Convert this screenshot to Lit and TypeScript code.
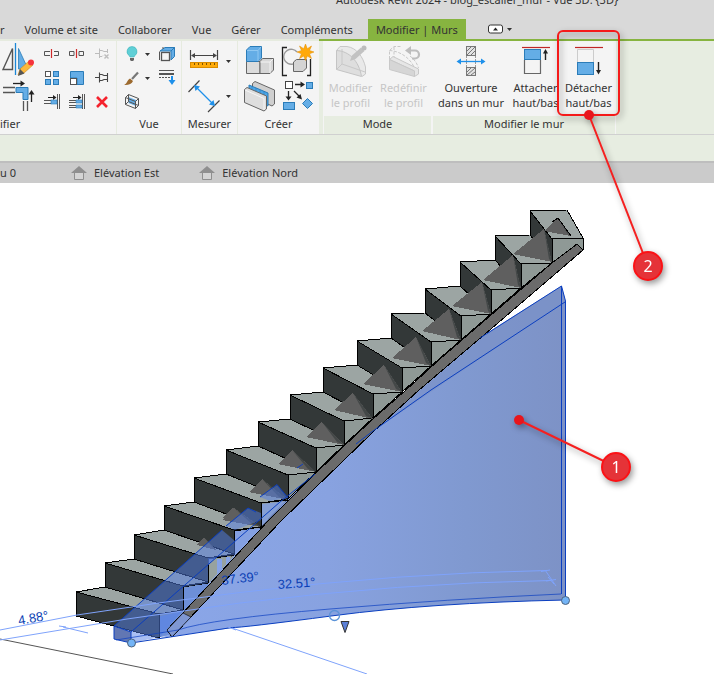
import { LitElement, html, svg, css } from "lit";
import { customElement } from "lit/decorators.js";

type Pt = [number, number];

/* Upper left and upper right corner of each riser, lowest step first. */
const STEPS: { l: Pt; r: Pt }[] = [
  { l: [76, 592], r: [159, 614] },
  { l: [105, 563], r: [183, 586] },
  { l: [134, 535], r: [208, 558] },
  { l: [164, 506], r: [234, 530] },
  { l: [194, 478], r: [261, 503] },
  { l: [226, 450], r: [288, 475] },
  { l: [258, 422], r: [316, 448] },
  { l: [290, 395], r: [344, 421] },
  { l: [323, 368], r: [373, 394] },
  { l: [357, 341], r: [402, 368] },
  { l: [391, 314], r: [431, 342] },
  { l: [425, 289], r: [461, 316] },
  { l: [460, 262], r: [491, 290] },
  { l: [495, 236], r: [521, 264] },
  { l: [530, 211], r: [552, 239] },
];
const RISE = 24;

/* Visible part of the underside seen through each tread: left, apex, right. */
const SUPPORTS: [Pt, Pt, Pt][] = [
  [[197, 545], [204, 537], [216, 550]],
  [[222, 518], [233, 508], [250, 523]],
  [[222, 520], [234, 508], [261, 527]],
  [[249, 492], [262, 479], [288, 500]],
  [[278, 464], [292, 450], [316, 472]],
  [[306, 437], [322, 422], [344, 445]],
  [[334, 410], [353, 393], [373, 419]],
  [[363, 384], [384, 365], [402, 392]],
  [[392, 358], [416, 337], [431, 366]],
  [[422, 331], [449, 309], [461, 340]],
  [[452, 306], [482, 282], [491, 314]],
  [[483, 280], [513, 255], [521, 288]],
  [[513, 254], [544, 229], [552, 262]],
  [[544, 231], [558, 218], [571, 236]],
];

const pts = (...p: Pt[]) => p.map((q) => q.join(",")).join(" ");
const drop = ([x, y]: Pt): Pt => [x, y + RISE];

const icon = (w: number, h: number, body: unknown) =>
  html`<svg width=${w} height=${h} viewBox="0 0 ${w} ${h}" aria-hidden="true">${body}</svg>`;

const caret = (x: number, y: number) =>
  svg`<path d="M${x} ${y}h5l-2.5 3z" fill="#333"/>`;

const G = "#555";
const B = "#64ade6";
const D = "#2b7cb8";

const ICONS = {
  mirror: icon(36, 36, svg`
    <path d="M3 28.5 12.500 7.500V28.500Z" fill="none" stroke=${G} stroke-width="1.400"/>
    <path d="M15.500 2V34" stroke="#1b87d6" stroke-width="1.300"/>
    <path d="M18.500 7.500V28H28Z" fill=${B} stroke=${D} stroke-width=".8"/>
    <path d="M18 34 20 28 29 20 33 24 24 32Z" fill="#fbb83e" stroke="#c98a20" stroke-width=".6"/>
    <path d="M18 35 20 28 24.500 32.500Z" fill="#555"/>
    <circle cx="31" cy="21.500" r="3" fill="#f5333c"/>`),
  trim: icon(36, 36, svg`
    <path d="M13 6.500H22" stroke="#222" stroke-width="1.300"/><path d="M20.500 3.500 25 6.500 20.500 9.500Z" fill="#222"/>
    <path d="M3 10.500H15M3 15.500H15" stroke=${G} stroke-width="1.300"/>
    <path d="M16 10.500H28V22.500H23V15.500H16Z" fill=${B} stroke=${D}/>
    <path d="M23.500 24V34M27.500 24V34" stroke=${G} stroke-width="1.300"/>
    <path d="M31.500 25V16" stroke="#222" stroke-width="1.300"/><path d="M28.500 17.500 31.500 13 34.500 17.500Z" fill="#222"/>`),
  split: icon(24, 24, svg`
    <path d="M10 10.500H4.500V14.500H10M14 10.500H18.500V14.500H14" fill="none" stroke=${G}/>
    <path d="M11.500 8V17" stroke="#d02a2a" stroke-width="1.200"/>`),
  splitGap: icon(24, 24, svg`
    <path d="M4.500 10.500H9V14.500H4.500ZM14 10.500H18.500V14.500H14Z" fill="none" stroke=${G}/>
    <path d="M11.500 8V17" stroke="#d02a2a" stroke-width="1.200"/>`),
  unpin: icon(24, 24, svg`
    <g fill="none" stroke="#bcbcbc"><path d="M5 12.500H10M9.500 7.500V17M10 9.500H12L14 10.500H17.500M10 15.500H12L13 14.500M17.500 8V12"/>
    <path d="M14.500 13.500 18.500 17.500M18.500 13.500 14.500 17.500" stroke-width="1.400"/></g>`),
  array: icon(24, 24, svg`
    <rect x="5.500" y="6.500" width="5" height="5" fill="#fff" stroke=${G}/>
    <g fill=${B} stroke=${D}><rect x="13.500" y="6.500" width="5" height="5"/><rect x="5.500" y="14.500" width="5" height="5"/><rect x="13.500" y="14.500" width="5" height="5"/></g>`),
  scale: icon(24, 24, svg`
    <path d="M5.500 6.500H18.500V19.500H12V13H5.500Z" fill=${B} stroke=${D}/>
    <rect x="5.500" y="13.500" width="6" height="6" fill="#fff" stroke=${G}/>`),
  pin: icon(24, 24, svg`
    <path d="M5 12.500H10M9.500 7.500V17.500M10 9.500H12L14 10.500H17M10 15.500H12L14 14.500H17M17.500 8V17" fill="none" stroke="#444" stroke-width="1.100"/>`),
  extend: icon(24, 24, svg`
    <path d="M8 8.500H14" stroke="#222"/><path d="M13 6 16.500 8.500 13 11Z" fill="#222"/>
    <path d="M4 11.500H11M4 14.500H11M17.500 5V20M19.500 5V20" stroke=${G}/>
    <rect x="11" y="11" width="6" height="4" fill=${B} stroke=${D} stroke-width=".6"/>`),
  extendMany: icon(24, 24, svg`
    <path d="M8 8.500H14" stroke="#222"/><path d="M13 6 16.500 8.500 13 11Z" fill="#222"/>
    <path d="M4 11.500H11M4 13.500H11M4 16.500H11M4 18.500H11M17.500 5V20M19.500 5V20" stroke=${G}/>
    <path d="M11 11H17V14H11ZM11 16H17V19H11Z" fill=${B} stroke=${D} stroke-width=".6"/>`),
  remove: icon(24, 24, svg`<path d="M7 8 17 18M17 8 7 18" stroke="#f5222d" stroke-width="2.600"/>`),
  bulb: icon(34, 24, svg`
    <path d="M12 5.500a5 5 0 0 0-3 9l1 1.500h4l1-1.500a5 5 0 0 0-3-9Z" fill="#5fcfd6" stroke="#3fb3bb" stroke-width=".6"/>
    <path d="M10 17H14V19L13 20H11L10 19Z" fill="#666"/>${caret(25, 12)}`),
  brush: icon(34, 24, svg`
    <path d="M12 14 18 7.500" stroke="#777" stroke-width="2.200"/>
    <path d="M4 20C7 19 7 15 10 13.500L13 16C12 19 8 20.500 4 20Z" fill="#9c6a2f"/>${caret(25, 12)}`),
  section: icon(34, 24, svg`
    <path d="M8.500 8 16 11V17L8.500 14Z" fill=${B}/>
    <path d="M5.500 8.500 15.500 12.500V19.500L5.500 15.500ZM5.500 8.500 8.500 5.500 18.500 9.500 15.500 12.500M18.500 9.500V16.500L15.500 19.500M8.500 5.500V12.500L18.500 16.500M5.500 15.500 8.500 12.500" fill="none" stroke=${G}/>`),
  cube: icon(24, 24, svg`
    <path d="M5 10 10 6.500H19.500L16 10ZM16 10 19.500 6.500V15.500L16 19Z" fill=${B} stroke=${D}/>
    <path d="M4.500 10.500V19M8 8V6" stroke=${G}/>
    <rect x="6.500" y="11.500" width="8" height="8" fill="#f4f4f4" stroke=${G} stroke-width="1.300"/>`),
  lines: icon(24, 24, svg`
    <path d="M4 5.500H19" stroke=${G}/><path d="M4 9H19" stroke=${G} stroke-width="2"/>
    <path d="M4 12.500H15" stroke=${G} stroke-dasharray="2 1"/>
    <path d="M17 11V16" stroke="#1e90ea" stroke-width="2"/><path d="M13.500 15H20.500L17 20Z" fill="#1e90ea"/>`),
  ruler: icon(52, 37, svg`
    <path d="M6.500 9V19M33.500 9V19M8 14.500H32" stroke="#444" stroke-width="1.200"/>
    <path d="M7 14.500 11 12V17ZM33 14.500 29 12V17Z" fill="#444"/>
    <rect x="6.500" y="21.500" width="27" height="5" fill="#ffab0a" stroke="#d98c00"/>
    <path d="M10.500 22V24M14.500 22V24M18.500 22V24M22.500 22V24M26.500 22V24M30.500 22V24" stroke="#7a5200"/>${caret(42, 19)}`),
  dimension: icon(52, 37, svg`
    <path d="M4.500 14 15.500 2.500M24 34 35.500 22.500" stroke="#444" stroke-width="1.200"/>
    <path d="M12 9 29 26" stroke="#1e90ea" stroke-width="1.300"/>
    <path d="M10 7 16 8.500 11.500 13ZM31 28 25 26.500 29.500 22Z" fill="#1e90ea"/>${caret(42, 17)}`),
  group: icon(38, 37, svg`
    <path d="M4.500 20.500H18V32.500H4.500Z" fill="#dcdcdc" stroke="#666"/>
    <path d="M18 20.500 20.500 17.500H31.500V29L28 32.500H18Z" fill="#d6d6d6" stroke="#666"/>
    <path d="M18.500 21H28V32M28 21 31 18" fill="none" stroke="#f3f3f3"/>
    <path d="M4.500 20.500V9L8 5.500H19.500V17L16 20.500Z" fill="#64ade6" stroke=${D}/>
    <path d="M5 9.500H16V20M16 9.500 19 6" fill="none" stroke="#8fc8f2"/>`),
  assembly: icon(38, 37, svg`
    <path d="M7 6.500H2.500V34.500H7M27 34.500H30.500V18" fill="none" stroke="#222" stroke-width="1.300"/>
    <path d="M17 11A7.500 7.500 0 1 0 13 23" fill="none" stroke="#999" stroke-width="1.400"/>
    <path d="M13.500 21 16.500 18.500H26.500V27L23 30.500H13.500Z" fill="#d4d4d4" stroke="#666"/>
    <path d="M25.500 3 27.300 7.700 31.500 5 29.500 9.500 34 11 29.500 12.800 31.500 17.500 27.300 15 25.500 19.500 23.700 15 19.500 17.500 21.500 12.800 17 11 21.500 9.500 19.500 5 23.700 7.700Z" fill="#ffa90a" stroke="#e08a00" stroke-width=".5"/>`),
  parts: icon(38, 37, svg`
    <path d="M10.500 5.500 13 3.500 32.500 12V26L30 28 10.500 19Z" fill="#cfcfcf" stroke="#666"/>
    <path d="M7 7 26 15V28L7 20Z" fill="#4ba6e8" stroke=${D}/>
    <path d="M10 8V21M14 10V22M18 12V24M22 13V25" stroke=${D} stroke-width=".6"/>
    <path d="M2.500 11.500 5 9.500 24.500 18V31L22 33 2.500 24.500Z" fill="#dedede" stroke="#666"/>
    <path d="M3 12 22 20.500V32" fill="none" stroke="#f5f5f5"/>`),
  convert: icon(38, 37, svg`
    <rect x="5.500" y="3.500" width="7" height="7" fill="#fff" stroke="#444"/>
    <rect x="26.500" y="4.500" width="6" height="6" fill=${B} stroke=${D}/>
    <rect x="3.500" y="24.500" width="11" height="7" fill=${B} stroke=${D}/>
    <path d="M27.500 20.500 32.500 25.500 27.500 30.500 22.500 25.500Z" fill=${B} stroke=${D}/>
    <path d="M15 6.500H21M8.500 13V19M14 13 19 18" stroke="#222" stroke-width="1.300"/>
    <path d="M20.500 3.500 25 6.500 20.500 9.500ZM5.500 18.500H11.500L8.500 22.500ZM22 21.500 16.500 19.500 20.500 16Z" fill="#222"/>`),
  editProfile: icon(36, 36, svg`
    <path d="M3.500 9.500 7 5.500H14C24 7 30 16 32.500 26V33L29 35.500" fill="#e9e9e9" stroke="#c8c8c8"/>
    <path d="M3.500 9.500C16 10 26 20 28.500 35.500L3.500 28.500Z" fill="#dedede" stroke="#c4c4c4"/>
    <path d="M3.500 28.500 9 23 32 31M9 23V8" fill="none" stroke="#c8c8c8"/>
    <path d="M17 20 19 14.500 28 6.500 31.500 10 22.500 18Z" fill="#c2c2c2"/><circle cx="31" cy="7" r="2.500" fill="#bcbcbc"/>`),
  resetProfile: icon(36, 36, svg`
    <path d="M3.500 18V9.500L8 5.500H15M3.500 9.500C14 10 24 17 28 26M8 6V17M24 15C28 18 31 22 32.500 27" fill="none" stroke="#c8c8c8" stroke-dasharray="3 1.500"/>
    <path d="M3.500 18.500 7 15.500 32.500 28V33L28.500 35.500V30Z" fill="#e6e6e6" stroke="#c8c8c8"/>
    <path d="M3.500 18.500 28.500 30V35.500L3.500 28.500Z" fill="#d6d6d6" stroke="#c8c8c8"/>
    <path d="M21 9.500H29A4 4 0 0 1 29 17.500H26" fill="none" stroke="#bdbdbd" stroke-width="2.200"/>
    <path d="M19 9.500 25 5V14Z" fill="#bdbdbd"/>`),
  opening: icon(36, 36, svg`
    <g fill="#e2e2e2" stroke="#777"><rect x="13.500" y="5.500" width="9" height="9"/><rect x="13.500" y="26.500" width="9" height="8"/></g>
    <path d="M14 10 18 6M14 14 22 6M18 14 22 10M14 31 18 27M14 34 22 27M18 34 22 31" stroke="#777"/>
    <path d="M13.500 15V26M22.500 15V26" stroke="#999" stroke-dasharray="2 1"/>
    <path d="M6 20.500H30" stroke="#1e90ea" stroke-width="1.300"/>
    <path d="M3.500 20.500 8 17.500V23.500ZM32.500 20.500 28 17.500V23.500Z" fill="#1e90ea"/>`),
  attach: icon(36, 36, svg`
    <path d="M4 6.500H32" stroke="#c02626" stroke-width="1.200"/>
    <path d="M6.500 19V32.500H22.500V19" fill="none" stroke="#666" stroke-width="1.200"/>
    <rect x="6.500" y="8.500" width="16" height="10" fill=${B} stroke=${D}/>
    <path d="M27.500 19V11" stroke="#222" stroke-width="1.400"/><path d="M25 12.500 27.500 8 30 12.500Z" fill="#222"/>`),
  detach: icon(36, 36, svg`
    <path d="M4 6.500H32" stroke="#c02626" stroke-width="1.200"/>
    <path d="M6.500 21V8.500H22.500V21" fill="none" stroke="#ccc"/>
    <rect x="6.500" y="21.500" width="16" height="12" fill=${B} stroke=${D}/>
    <path d="M27.500 21V30" stroke="#222" stroke-width="1.400"/><path d="M25 29 27.500 33.500 30 29Z" fill="#222"/>`),
  house: icon(16, 16, svg`
    <path d="M8 1 16 8H0Z" fill="#8f8f8f"/><path d="M3.500 8V14.500H12.500V8" fill="#d4d4d4" stroke="#8f8f8f"/>`),
};

const tool = (label: string, glyph: unknown) =>
  html`<button class="tool" type="button" aria-label=${label}>${glyph}</button>`;

@customElement("ribbon-panel")
class RibbonPanel extends LitElement {
  static properties = { label: {}, tinted: { type: Boolean, reflect: true } };
  declare label: string;
  declare tinted: boolean;

  static styles = css`
    :host { display: flex; flex-direction: column; box-sizing: border-box; background: #f4f4f4; border-right: 1px solid #e6ebdf; text-align: center; }
    .body { flex: 1; display: flex; min-height: 0; }
    .label { height: 18px; line-height: 16px; }
    :host([tinted]) { border-right: 1px solid #f4f4f4; border-left: 1px solid #f4f4f4; }
    :host([tinted]) .label { background: #e7ede1; }
  `;

  render() {
    return html`<div class="body"><slot></slot></div><div class="label">${this.label}</div>`;
  }
}

@customElement("model-view")
class ModelView extends LitElement {
  static styles = css`
    :host { display: block; overflow: hidden; background: #fff; }
    svg { display: block; }
    .edge { stroke: #000; stroke-width: 1; stroke-linejoin: round; shape-rendering: crispEdges; }
    .tread { fill: #9ca5a3; }
    .riser { fill: #333838; }
    .side { fill: #8f9996; }
    .support { fill: #5f5f5f; shape-rendering: crispEdges; }
    .shade { fill: #444848; }
    .line { fill: none; stroke: #0b3fc0; stroke-width: 1; }
    .guide { fill: none; stroke: #7fa3fb; stroke-width: 1; }
    .angle { font: 13px "Liberation Sans", Arial, sans-serif; fill: #0b3fb4; }
    .grip { fill: #73b4f6; stroke: #4d6480; stroke-width: 1; }
  `;

  private step(i: number) {
    const { l, r } = STEPS[i];
    const n = STEPS[i + 1];
    const back = n ? [drop(n.l), drop(n.r)] : ([[567, 210], [583, 238]] as Pt[]);
    return svg`
      <polygon class="side edge" points=${n ? pts(r, back[1], drop(r)) : pts(r, [583, 238], [583, 250], [577, 245], drop(r))}/>
      <polygon class="tread edge" points=${pts(l, back[0], back[1], r)}/>
      <polygon class="riser edge" points=${pts(l, r, drop(r), drop(l))}/>`;
  }

  render() {
    return html`<svg width="714" height="491" viewBox="0 183 714 491" role="img" aria-label="Vue 3D">
      <defs>
        <linearGradient id="wall" gradientUnits="userSpaceOnUse" x1="170" y1="0" x2="565" y2="0">
          <stop offset="0" stop-color="#8aa6e8"/><stop offset=".4" stop-color="#88a2e0"/>
          <stop offset=".75" stop-color="#8099d0"/><stop offset="1" stop-color="#7d92c6"/>
        </linearGradient>
      </defs>
      <path d="M0 639 173 674" stroke="#555" fill="none"/>
      <path d="M160 638 172 634 276 521 373 428 419 387 476 340 561.500 286 565.500 301V600Q430 603 335 615.500T232 628Z" fill="url(#wall)"/>
      <path d="M373 431 419 387 476 340 561.500 286 565.500 301Z" fill="#7a92c8" opacity=".7"/>
      <path d="M160 637V616L208 560 234 532 261 504 316 460V474L172 635Z" fill="#88a3e4"/>
      ${STEPS.map((_, k) => this.step(STEPS.length - 1 - k))}
      ${SUPPORTS.map(([a, b, c]) => svg`
        <polygon class="support" points=${pts(a, b, c)}/>
        <polygon class="shade" points=${pts(b, c, [Math.round((b[0] + 2 * c[0]) / 3), c[1] - 3])}/>`)}
      <path class="edge" d="M552 222 558 218 571 236" fill="none"/>

      <polygon points="183,588 208,583 208,590 172,634 160,637 160,616 183,611" fill="#6d8fd8"/>
      <path d="M209 560 234 556 208 584Z" fill="#97a29f"/>
      <path d="M217 559h5v10l-5 5ZM226 557h4v3l-4 5Z" fill="#86a3e8"/>
      <polygon points="235,531 261,528 234,555" fill="#84a0e2"/>
      <polygon points="262,504 288,501 261,527" fill="#84a0e2" opacity=".85"/>
      <path class="edge" d="M159 616V638M183 610V587L208 583V559L234 555V531L261 527V503L288 500" fill="none"/>

      <g fill="#5480e8" fill-opacity=".5">
        <path d="M114 626 222 530 235 541 131 632Z"/>
        <path d="M131 632 235 541V555L208 558V583L183 587V610L160 637 131 643Z"/>
        <path d="M226 526 248 508 261 513V520L235 530Z"/>
        <path d="M260 497 277 485 288 498 270 501Z"/>
        <path d="M114 626 131 632V643L114 639Z" fill="#3b55a0" fill-opacity=".8"/>
      </g>

      <path class="edge" d="M167 630 208 586 269 520 316 473 344 446 373 419 406 390 440 359 491 315 552 263 577 244 583 250 491 329 419 390 373 432 281 521 172 637Z" fill="#6b6b6b"/>
      <path d="M167 630 183 613 191 617 172 637Z" fill="#7f97d2" stroke="#000" stroke-width=".6"/>

      <g class="line">
        <path d="M114 626 222 530M226 526 248 508 256 512M260 497 277 484.500 288 498M297 468 303 464"/>
        <path d="M131 632 280 502 315 474"/>
        <path d="M356 444 373 431 431 390 565 302"/>
        <path d="M480 338 561.500 286 565.500 301V600M561.500 286V594" />
        <path d="M565 600Q430 603 335 615.500T232 627.500L131 643 114 639V626L131 632V643"/>
        <path d="M561 594Q450 599 330 609T178 630L116 640" stroke-opacity=".7"/>
      </g>

      <g class="guide">
        <path d="M0 630 77 615Q160 602 240 592.500 400 573 547 570.500"/>
        <path d="M0 640 127 619 240 603Q400 583 551 580.500"/>
        <path d="M541 571.500 550 570M545 570 556 586M546 581 556 579.500M548 577 554 584"/>
        <path d="M63 627 88 633M59 626 66 627M228 627 236 630M232 628 367 674"/>
      </g>

      <text class="angle" transform="rotate(-10 19 625)" x="19" y="625">4.88°</text>
      <text class="angle" transform="rotate(-7 222 585)" x="222" y="585">37.39°</text>
      <text class="angle" transform="rotate(-4 278 589)" x="278" y="589">32.51°</text>

      <circle class="grip" cx="565.500" cy="600.500" r="4"/>
      <circle class="grip" cx="131.500" cy="643" r="4"/>
      <circle cx="334.500" cy="615.500" r="5" fill="none" stroke="#5b93d8" stroke-width="1.300"/>
      <path d="M341 621.500H349L345 632.500Z" fill="#5b7fd6" stroke="#333"/>
    </svg>`;
  }
}

@customElement("app-root")
class AppRoot extends LitElement {
  static styles = css`
    :host { display: flex; flex-direction: column; position: relative; min-height: 100vh; overflow: hidden; background: #fff; color: #333; font: 11px/15px "Noto Sans", "Open Sans", sans-serif; }
    button { font: inherit; color: inherit; background: none; border: 0; padding: 0; margin: 0; white-space: nowrap; }
    svg { display: block; }
    .title { height: 19px; box-sizing: border-box; padding-left: 336px; background: #d9d9d9; overflow: hidden; white-space: nowrap; }
    .title span { display: block; margin-top: -8px; }
    .tabs { display: flex; gap: 20px; height: 20px; background: #d9d9d9; }
    .tab { height: 20px; }
    .tab.active { background: #87b440; margin: 0 -8px 0 -5px; padding: 0 8px; }
    .state { display: flex; align-items: center; gap: 4px; padding-left: 10px; }
    .ribbon { display: flex; height: 93px; background: #e7ede1; border-bottom: 1px solid #d0d0d0; border-top: 2px solid #87b440; position: relative; }
    .ribbon::before { content: ""; position: absolute; left: 0; top: -2px; width: 319px; height: 2px; background: #e6ebdf; }
    .modify { width: 117px; text-align: left; }
    .view { width: 65px; }
    .measure { width: 56px; }
    .create { width: 81px; margin-right: 4px; border: 0; }
    .mode { width: 109px; }
    .wall { width: 184px; }
    .big { display: grid; grid-template-rows: 36px 36px; width: 40px; }
    .modify-grid { display: grid; grid-template: repeat(3, 24px) / repeat(3, 25px); }
    .view-grid { display: grid; grid-template: repeat(3, 24px) / 34px 24px; padding-left: 3px; column-gap: 1px; }
    .stack { display: grid; grid-template: 37px 37px / 52px; padding-left: 2px; }
    .create-grid { display: grid; grid-template: 37px 37px / 38px 38px; padding-left: 4px; }
    .command { display: flex; flex-direction: column; align-items: center; width: 53px; gap: 3px; }
    .command.wide { width: 76px; }
    .command:disabled { color: #c6c6c6; }
    .options { height: 26px; background: #e7ede1; }
    .views { display: flex; gap: 40px; height: 20px; border-top: 2px solid #bebebe; background: #cbcbcb; line-height: 20px; }
    .views button { display: flex; align-items: center; gap: 7px; }
    .views .first { width: 31px; text-align: left; }
    model-view { flex: 1; }
    .callouts { position: absolute; left: 0; top: 0; pointer-events: none; filter: drop-shadow(2px 3px 3px #0006); }
    .number { font: 16px "Noto Sans", sans-serif; fill: #fff; text-anchor: middle; }
  `;

  private callout(n: number, from: Pt, to: Pt) {
    return svg`
      <line x1=${from[0]} y1=${from[1]} x2=${to[0]} y2=${to[1]} stroke="#f52020" stroke-width="2"/>
      <circle cx=${from[0]} cy=${from[1]} r="5" fill="#e8151c"/>
      <circle cx=${to[0]} cy=${to[1]} r="14" fill="#e53338" stroke="#fb1216" stroke-width="2"/>
      <text class="number" x=${to[0]} y=${to[1] + 6}>${n}</text>`;
  }

  render() {
    return html`
      <header class="title"><span>Autodesk Revit 2024 - blog_escalier_mur - Vue 3D: {3D}</span></header>
      <nav class="tabs">
        ${["r", "Volume et site", "Collaborer", "Vue", "Gérer", "Compléments"].map(
          (t) => html`<button class="tab" type="button">${t}</button>`)}
        <button class="tab active" type="button">Modifier | Murs</button>
        <button class="state" type="button" aria-label="État du ruban">
          ${icon(26, 10, svg`<rect x=".5" y="1" width="14" height="8" rx="2" fill="#fff" stroke="#333"/><path d="M5 6.500 7.500 3.500 10 6.500Z" fill="#222"/><path d="M19 4H24L21.500 7Z" fill="#333"/>`)}
        </button>
      </nav>
      <section class="ribbon">
        <ribbon-panel class="modify" label="ifier">
          <div class="big">${tool("Symétrie", ICONS.mirror)}${tool("Ajuster", ICONS.trim)}</div>
          <div class="modify-grid">
            ${tool("Scinder", ICONS.split)}${tool("Scinder avec espace", ICONS.splitGap)}${tool("Déverrouiller", ICONS.unpin)}
            ${tool("Réseau", ICONS.array)}${tool("Échelle", ICONS.scale)}${tool("Verrouiller", ICONS.pin)}
            ${tool("Prolonger", ICONS.extend)}${tool("Prolonger plusieurs", ICONS.extendMany)}${tool("Supprimer", ICONS.remove)}
          </div>
        </ribbon-panel>
        <ribbon-panel class="view" label="Vue">
          <div class="view-grid">
            ${tool("Masquer", ICONS.bulb)}${tool("Afficher", ICONS.cube)}
            ${tool("Remplacer", ICONS.brush)}${tool("Épaisseur", ICONS.lines)}
            ${tool("Zone de sélection", ICONS.section)}
          </div>
        </ribbon-panel>
        <ribbon-panel class="measure" label="Mesurer">
          <div class="stack">${tool("Mesurer", ICONS.ruler)}${tool("Cote", ICONS.dimension)}</div>
        </ribbon-panel>
        <ribbon-panel class="create" label="Créer">
          <div class="create-grid">
            ${tool("Groupe", ICONS.group)}${tool("Assemblage", ICONS.assembly)}
            ${tool("Éléments", ICONS.parts)}${tool("Similaire", ICONS.convert)}
          </div>
        </ribbon-panel>
        <ribbon-panel class="mode" label="Mode" tinted>
          <button class="command" type="button" disabled>${ICONS.editProfile}<span>Modifier<br />le profil</span></button>
          <button class="command" type="button" disabled>${ICONS.resetProfile}<span>Redéfinir<br />le profil</span></button>
        </ribbon-panel>
        <ribbon-panel class="wall" label="Modifier le mur" tinted>
          <button class="command wide" type="button">${ICONS.opening}<span>Ouverture<br />dans un mur</span></button>
          <button class="command" type="button">${ICONS.attach}<span>Attacher<br />haut/bas</span></button>
          <button class="command" type="button">${ICONS.detach}<span>Détacher<br />haut/bas</span></button>
        </ribbon-panel>
      </section>
      <div class="options"></div>
      <nav class="views">
        <button class="first" type="button">u 0</button>
        <button type="button">${ICONS.house}Elévation Est</button>
        <button type="button">${ICONS.house}Elévation Nord</button>
      </nav>
      <model-view></model-view>
      <svg class="callouts" width="714" height="500" aria-hidden="true">
        <rect x="558" y="31" width="61" height="84" rx="5" fill="none" stroke="#f51a1a" stroke-width="2"/>
        ${this.callout(2, [589, 115], [648, 266])}
        ${this.callout(1, [519, 420], [616, 467])}
      </svg>`;
  }
}
